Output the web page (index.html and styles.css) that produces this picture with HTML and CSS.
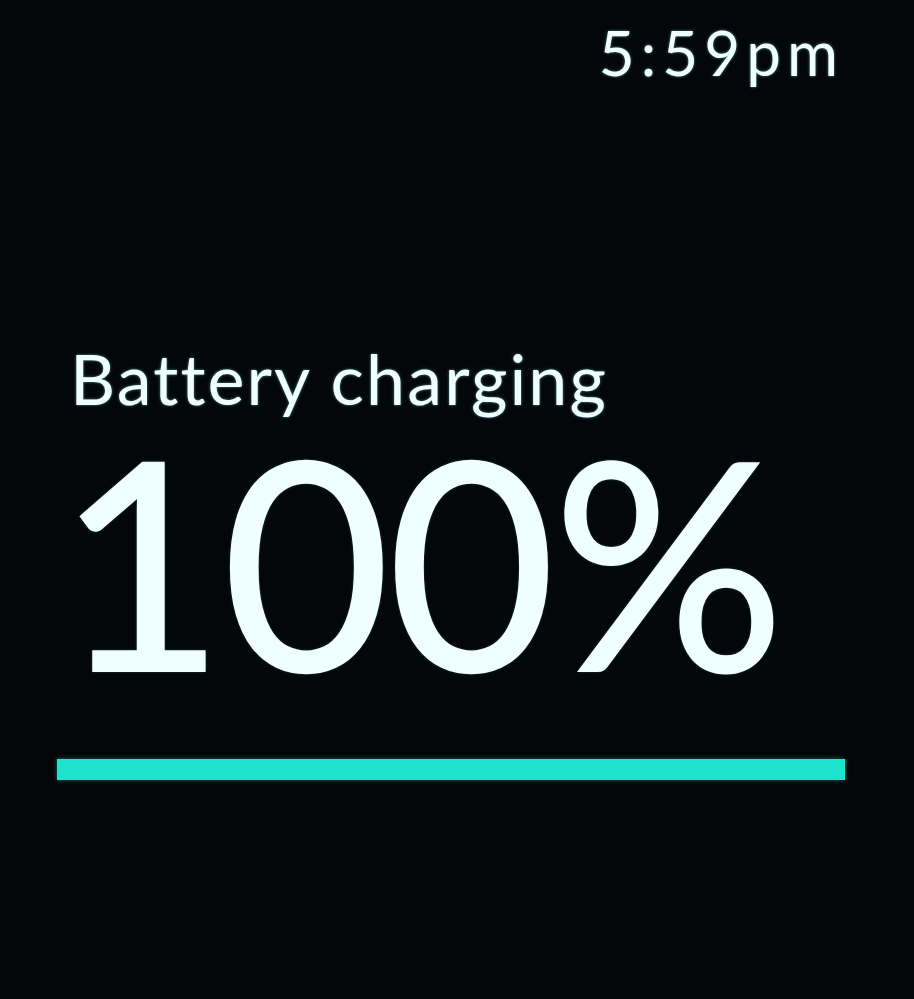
FILE: index.html
```html
<!DOCTYPE html>
<html>
<head>
<meta charset="utf-8">
<link rel="stylesheet" href="styles.css">
</head>
<body>
<div class="screen">
  <div class="status">
    <span class="time">5:59pm</span>
  </div>
  <div class="content">
    <div class="label">Battery charging</div>
    <div class="percent">100%</div>
    <div class="bar"></div>
  </div>
</div>
</body>
</html>
```
FILE: styles.css
```css
html, body {
  margin: 0;
  padding: 0;
  background: #040709;
}
.screen {
  width: 914px;
  height: 999px;
  display: flex;
  flex-direction: column;
  font-family: Lato, "Noto Sans", sans-serif;
  color: #effefe;
  text-shadow: 0 0 3px rgba(120, 220, 240, 0.6);
}
.status {
  display: flex;
  justify-content: flex-end;
  padding: 14px 76px 0 0;
}
.time {
  font-size: 62px;
  line-height: 76px;
  letter-spacing: 6px;
  margin-right: -6px;
}
.content {
  display: flex;
  flex-direction: column;
  padding: 248px 69px 0 57px;
}
.label {
  font-size: 70px;
  line-height: 80px;
  padding-left: 13px;
  letter-spacing: 2.1px;
}
.percent {
  font-size: 290px;
  line-height: 290px;
  padding-left: 0;
  letter-spacing: -3px;
  margin-top: -4px;
  font-weight: 400;
  -webkit-text-stroke: 2px #effefe;
}
.bar {
  height: 21px;
  background: #1ce3cc;
  margin-top: 55px;
  box-shadow: 0 0 4px rgba(30, 220, 200, 0.5);
}
```
